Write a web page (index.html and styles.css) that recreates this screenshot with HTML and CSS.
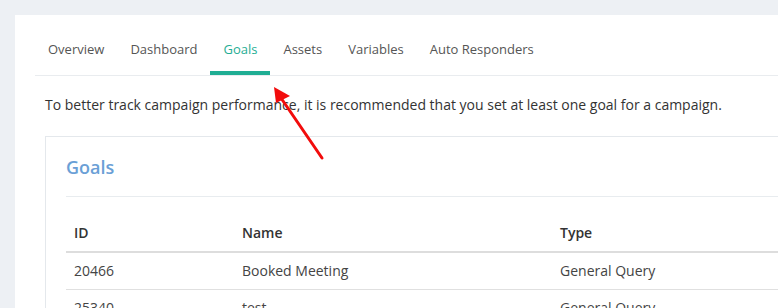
FILE: index.html
```html
<!doctype html>
<html lang="en">
<head>
  <meta charset="utf-8" />
  <title>Campaign Goals</title>
  <link rel="stylesheet" href="styles.css">
</head>
<body>
  <div class="page">
    <nav class="tabs">
      <a class="tab">Overview</a>
      <a class="tab">Dashboard</a>
      <a class="tab active">Goals</a>
      <a class="tab">Assets</a>
      <a class="tab">Variables</a>
      <a class="tab">Auto Responders</a>
    </nav>

    <div class="content">
      <p class="hint">To better track campaign performance, it is recommended that you set at least one goal for a campaign.</p>

      <div class="box">
        <h2 class="boxTitle">Goals</h2>
        <table class="goals">
          <colgroup>
            <col class="cId">
            <col class="cName">
            <col>
          </colgroup>
          <thead>
            <tr><th>ID</th><th>Name</th><th>Type</th></tr>
          </thead>
          <tbody>
            <tr><td>20466</td><td>Booked Meeting</td><td>General Query</td></tr>
            <tr><td>25340</td><td>test</td><td>General Query</td></tr>
          </tbody>
        </table>
      </div>
    </div>
  </div>

  <!-- annotation arrow pointing at the Goals tab -->
  <svg class="arrow" width="778" height="308" viewBox="0 0 778 308" aria-hidden="true">
    <line x1="322" y1="158" x2="281" y2="98" stroke="#f20c0c" stroke-width="3" stroke-linecap="round"/>
    <polygon points="274,87 276,103 290,96" fill="#f20c0c"/>
  </svg>
</body>
</html>
```

FILE: styles.css
```css
*{ box-sizing:border-box }
body{
  margin:0;
  background:#edf0f4;
  font-family:"Open Sans", "Liberation Sans", Arial, sans-serif;
  color:#333;
  overflow:hidden;
  height:308px;
}

.page{
  margin:15px 0 0 15px;
  width:1000px;
  background:#fff;
  min-height:400px;
}

/* Tabs */
.tabs{
  display:flex;
  margin:0 20px;
  padding-top:24px;
  border-bottom:1px solid #e9ecef;
}
.tab{
  padding:0 13px 12px;
  font-size:13px;
  line-height:20px;
  color:#555;
  border-bottom:4px solid transparent;
  cursor:pointer;
}
.tab.active{
  color:#1fae94;
  border-bottom-color:#1fae94;
}

.content{ padding:0 30px; }

.hint{
  margin:19px 0 21px;
  font-size:14px;
  line-height:20px;
  color:#333;
}

/* Goals box */
.box{
  border:1px solid #e4e8ec;
  padding:0 20px;
}
.boxTitle{
  margin:0;
  padding:18px 0 16px;
  font-size:18px;
  line-height:25px;
  font-weight:600;
  color:#6a9fd6;
  border-bottom:1px solid #e8ecef;
}

.goals{
  width:100%;
  margin-top:18px;
  border-collapse:collapse;
  table-layout:fixed;
  font-size:14px;
}
.cId{ width:168px; }
.cName{ width:318px; }
.goals th,
.goals td{
  padding:8px;
  line-height:20px;
  text-align:left;
}
.goals th{
  font-weight:600;
  color:#333;
  border-bottom:2px solid #dddddd;
}
.goals td{
  color:#444;
  border-bottom:1px solid #e0e0e0;
}

.arrow{
  position:absolute;
  left:0; top:0;
  pointer-events:none;
}
```
